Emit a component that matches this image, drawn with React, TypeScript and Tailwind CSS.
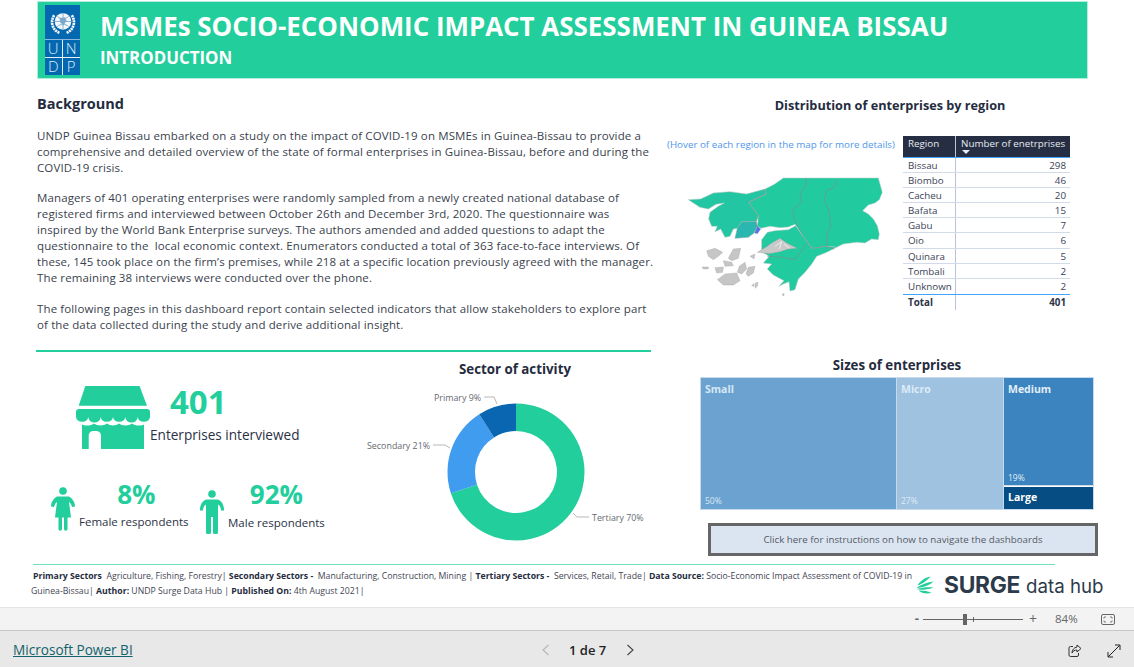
import React from "react";

const GREEN = "#21ce9c";

const rows: [string, string][] = [
  ["Bissau", "298"],
  ["Biombo", "46"],
  ["Cacheu", "20"],
  ["Bafata", "15"],
  ["Gabu", "7"],
  ["Oio", "6"],
  ["Quinara", "5"],
  ["Tombali", "2"],
  ["Unknown", "2"],
];

function polar(cx: number, cy: number, r: number, deg: number) {
  const a = ((deg - 90) * Math.PI) / 180;
  return [cx + r * Math.cos(a), cy + r * Math.sin(a)];
}
function arc(cx: number, cy: number, ro: number, ri: number, a0: number, a1: number) {
  const [x0, y0] = polar(cx, cy, ro, a0);
  const [x1, y1] = polar(cx, cy, ro, a1);
  const [x2, y2] = polar(cx, cy, ri, a1);
  const [x3, y3] = polar(cx, cy, ri, a0);
  const large = a1 - a0 > 180 ? 1 : 0;
  return `M${x0} ${y0}A${ro} ${ro} 0 ${large} 1 ${x1} ${y1}L${x2} ${y2}A${ri} ${ri} 0 ${large} 0 ${x3} ${y3}Z`;
}

function UndpLogo() {
  return (
    <div className="w-[35px] h-[70px] bg-[#0468b1] flex flex-col shrink-0 text-[#dcebf6]">
      <div className="h-[34px] flex items-center justify-center">
        <svg width="28" height="25" viewBox="0 0 27 24">
          <circle cx="13.5" cy="11" r="8" fill="#f4f8fb" />
          <path d="M5 5C1 11 3 19 10 22M22 5C26 11 24 19 17 22" stroke="#f4f8fb" strokeWidth="2.6" fill="none" strokeDasharray="2 .6" />
          <path d="M13.5 3v16M5.500 11h16M8 6c3 3 8 3 11 0M8 16c3-3 8-3 11 0" stroke="#6f9fc9" strokeWidth=".8" fill="none" />
          <path d="M10 8l5-1 2 3-3 5-3-3z" fill="#7ba7cd" />
        </svg>
      </div>
      <div className="flex-1 grid grid-cols-2 grid-rows-2 border-t border-[#8db9da] text-[15px] leading-none font-light">
        <div className="border-r border-b border-[#e6f0f7] flex items-center justify-center">U</div>
        <div className="border-b border-[#e6f0f7] flex items-center justify-center">N</div>
        <div className="border-r border-[#e6f0f7] flex items-center justify-center">D</div>
        <div className="flex items-center justify-center">P</div>
      </div>
    </div>
  );
}

function GuineaMap() {
  const main = "#21ca9f";
  const line = "#7d8f8c";
  return (
    <svg width="210" height="130" viewBox="0 0 630 390" className="block">
      {/* Mainland east, north of the estuary */}
      <path d="M255 60L283 46L310 27L595 27L600 45L607 70L598 92L585 102L565 108L548 125L565 135L580 150L592 170L598 195L595 212L575 210L555 222L530 220L490 225L470 235L440 232L410 240L395 238L375 210L345 166L325 174L300 176L270 172L243 178L232 172L235 140L205 100L258 75Z" fill={main} stroke="#c4cccb" strokeWidth="1.500" />
      {/* Cacheu */}
      <path d="M25 92L62 90L100 72L150 68L200 75L255 60L258 75L205 100L235 140L228 158L185 158L172 178L160 180L150 202L135 205L122 180L105 188L112 172L95 172L86 150L90 130L115 112L133 102L108 106L85 120L60 115Z" fill="#22c6a2" stroke="#b9c4c2" strokeWidth="1.500" />
      {/* Biombo */}
      <path d="M228 158L185 158L172 178L165 208L205 205L222 192L232 172Z" fill="#2ab7b0" stroke="#8ea8a8" strokeWidth="1.500" />
      {/* Bissau */}
      <path d="M232 172L242 180L232 194L224 192Z" fill="#5a70e8" stroke="#7f8ab0" strokeWidth="1" />
      {/* South */}
      <path d="M347 170L375 210L395 238L440 232L470 235L440 250L410 262L395 285L375 310L355 330L350 345L345 362L330 366L327 338L310 345L297 352L312 335L280 318L262 300L275 285L250 282L268 262L245 248L245 212L262 190L285 185L325 182Z" fill={main} stroke="#b9c4c2" strokeWidth="1.500" />
      {/* borders */}
      <g fill="none" stroke={line} strokeWidth="2">
        <path d="M378 27L380 42L360 75L365 100L335 125L350 165L375 210L395 238L440 232" />
        <path d="M470 30L462 55L440 65L432 90L448 130L452 170L440 200L440 232L462 240" />
        <path d="M255 60L258 75L205 100L235 140L228 158L232 172" />
        <path d="M262 262L300 264L345 272L378 226" />
      </g>
      {/* inner estuary */}
      <path d="M232 250L262 232L275 222L300 208L320 222L352 238L325 240L300 248L268 254Z" fill="#c9c9c9" stroke="#999" strokeWidth="1" />
      <path d="M285 232L305 218L298 240M312 225L328 238" stroke="#fff" strokeWidth="2" fill="none" />
      {/* islands */}
      <g fill="#c6c6c6" stroke="#9a9a9a" strokeWidth="1">
        <path d="M80 245L105 238L128 250L115 262L100 272L85 262Z" />
        <path d="M145 268L160 240L182 238L175 268L155 275Z" />
        <path d="M130 275L155 280L160 290L135 292Z" />
        <path d="M105 296L130 294L128 310L110 312Z" />
        <path d="M178 292L195 280L200 300L185 315L172 310Z" />
        <path d="M205 295L225 292L220 312L205 322L198 315Z" />
        <path d="M112 332L135 315L170 312L180 335L160 348L130 348Z" />
        <path d="M210 262L225 255L222 270Z" />
        <path d="M66 294L86 294L84 300L70 300Z" />
        <path d="M215 350L222 344L222 352ZM226 342L234 340L232 352L225 358Z" />
        <path d="M306 378L312 372L312 380Z" />
      </g>
    </svg>
  );
}

function RegionTable() {
  return (
    <div className="w-[167px] text-[9.800px] text-[#3a4256]">
      <div className="flex bg-[#252e42] h-[21px] text-[#e9edf3]">
        <div className="w-[53px] shrink-0 pl-[5px] pt-[1px] border-r border-[#b8c4d8]">Region</div>
        <div className="flex-1 pl-[5px] pt-[1px] relative whitespace-nowrap">
          Number of enetrprises
          <span className="absolute left-[6px] top-[14px] w-0 h-0 border-l-[4px] border-r-[4px] border-t-[4px] border-l-transparent border-r-transparent border-t-[#e9edf3]" />
        </div>
      </div>
      <div className="h-[1px] bg-[#41a4ff]" />
      {rows.map(([r, v], i) => (
        <div key={r} className={`flex h-[15.100px] leading-[15px] ${i < rows.length - 1 ? "border-b border-[#d4dbe8]" : ""}`}>
          <div className="w-[53px] shrink-0 pl-[5px] border-r border-[#b8c4d8]">{r}</div>
          <div className="flex-1 text-right pr-[4px]">{v}</div>
        </div>
      ))}
      <div className="h-[1px] bg-[#41a4ff]" />
      <div className="flex h-[15px] leading-[15px] font-bold text-[#2c3448]">
        <div className="w-[53px] shrink-0 pl-[5px] border-r border-[#b8c4d8]">Total</div>
        <div className="flex-1 text-right pr-[4px]">401</div>
      </div>
    </div>
  );
}

function Store() {
  return (
    <svg width="74" height="64" viewBox="0 0 74 64" className="shrink-0">
      <path d="M9.300 0H63.600L71 19.700H2.700Z" fill={GREEN} />
      <path d="M3 23H71A3 3 0 0 1 74 26V31A6.200 5.500 0 0 1 61.700 31A6.200 5.500 0 0 1 49.300 31A6.200 5.500 0 0 1 37 31A6.200 5.500 0 0 1 24.700 31A6.200 5.500 0 0 1 12.300 31A6.200 5.500 0 0 1 0 31V26A3 3 0 0 1 3 23Z" fill={GREEN} />
      <path fillRule="evenodd" d="M6 38.500C9 40 15 40 18 37.500C21 40 28 40 31 37.500C34 40 40 40 43 37.500C46 40 53 40 56 37.500C59 40 65 40 68 38.500V63H25V49A5 5 0 0 0 20 45H18A5 5 0 0 0 12.700 49V63H6Z" fill={GREEN} />
    </svg>
  );
}

function Female() {
  return (
    <svg width="24" height="44" viewBox="0 0 24 44" className="shrink-0">
      <circle cx="12" cy="4" r="3.800" fill={GREEN} />
      <path d="M6 9.500H18C21 11 24 15 24 19.500L21 20C20.500 17.500 19 15.500 18 15L20 30.500H4L6 15C5 15.500 3.500 17.500 3 20L0 19.500C0 15 3 11 6 9.500Z" fill={GREEN} />
      <path d="M7.500 30H11V42A1.700 1.700 0 0 1 7.500 42ZM13 30H16.500V42A1.700 1.700 0 0 1 13 42Z" fill={GREEN} />
    </svg>
  );
}

function Male() {
  return (
    <svg width="24" height="44" viewBox="0 0 24 44" className="shrink-0">
      <circle cx="12" cy="4" r="3.800" fill={GREEN} />
      <path d="M7 9.500H17C21 10 24 14.500 24 19.500V20.500H21C21 17.500 19.500 15.500 18 14.500V42A1.900 1.900 0 0 1 13 42V27H11V42A1.900 1.900 0 0 1 6 42V14.500C4.500 15.500 3 17.500 3 20.500H0V19.500C0 14.500 3 10 7 9.500Z" fill={GREEN} />
    </svg>
  );
}

function Donut() {
  const cx = 166;
  const cy = 91;
  return (
    <svg width="310" height="160" viewBox="0 0 310 160" className="block" style={{ fontFamily: "'Open Sans', sans-serif" }}>
      <path d={arc(cx, cy, 68.5, 41, 0, 252)} fill="#21ce9c" />
      <path d={arc(cx, cy, 68.5, 41, 252, 327.6)} fill="#3f9cee" />
      <path d={arc(cx, cy, 68.5, 41, 327.6, 360)} fill="#0a66b0" />
      <g fill="none" stroke="#b8b8b8" strokeWidth="1">
        <path d="M134 16H144L147 23" />
        <path d="M83 64H95L100 67" />
        <path d="M223 132L227 136H239" />
      </g>
      <g fill="#666a70" fontSize="8.900">
        <text x="84" y="20">Primary 9%</text>
        <text x="17" y="68">Secondary 21%</text>
        <text x="242" y="140">Tertiary 70%</text>
      </g>
    </svg>
  );
}

function Treemap() {
  return (
    <div className="w-[394px] h-[133px] flex border border-[#c8d9ec] text-white">
      <div className="w-[196px] bg-[#6ca2d0] border-r border-[#c8d9ec] flex flex-col justify-between px-[4px] text-[#d8e8f5]">
        <span className="text-[10.500px] font-bold pt-[4px]">Small</span>
        <span className="text-[8.500px] pb-[1px]">50%</span>
      </div>
      <div className="w-[107px] bg-[#9fc2e0] border-r border-[#c8d9ec] flex flex-col justify-between px-[4px] text-[#dcebf7]">
        <span className="text-[10.500px] font-bold pt-[4px]">Micro</span>
        <span className="text-[8.500px] pb-[1px]">27%</span>
      </div>
      <div className="flex-1 flex flex-col">
        <div className="flex-1 bg-[#3b84c0] flex flex-col justify-between px-[4px] border-b border-[#c8d9ec]">
          <span className="text-[10.500px] font-bold pt-[4px] text-[#e3eff8]">Medium</span>
          <span className="text-[8.500px] text-[#e3eff8]">19%</span>
        </div>
        <div className="h-[23px] bg-[#054d82] border-t border-[#fff] px-[4px] flex items-center">
          <span className="text-[10.500px] font-bold">Large</span>
        </div>
      </div>
    </div>
  );
}

function SurgeLogo() {
  return (
    <div className="flex items-center gap-[10px] shrink-0">
      <svg width="18" height="19" viewBox="0 0 18 18">
        <g fill={GREEN}>
          <path d="M1.500 9C4 4.500 9 1 14.500 0C12 3.500 7 7 1.500 9Z" />
          <path d="M.5 11.500C5 8 11.500 5.500 17.500 5C14 8.500 7 11 .5 11.500Z" />
          <path d="M.5 12.500C6 10.800 12 10.500 17.500 11C12.500 13.200 6 13.800 .5 12.500Z" />
          <path d="M2.500 14C7 13.800 11.500 14.500 15.500 16.300C11 17.800 5.500 17 2.500 14Z" />
        </g>
      </svg>
      <div className="flex items-baseline gap-[6px] text-[#2d3a4a] leading-none" style={{ fontFamily: "Inter, sans-serif" }}>
        <span className="text-[22.800px] font-bold tracking-[-0.3px]">SURGE</span>
        <span className="text-[18.700px]">data hub</span>
      </div>
    </div>
  );
}

export default function App() {
  return (
    <div className="w-[1134px] h-[667px] overflow-hidden bg-white flex flex-col text-[#2b3245]" style={{ fontFamily: "'Open Sans', 'Noto Sans', sans-serif" }}>
      {/* Header */}
      <div className="ml-[37px] mt-[1px] w-[1051px] h-[78px] bg-[#21ce9c] border border-[#b5ecdc] flex items-center pl-[7px] shrink-0">
        <UndpLogo />
        <div className="ml-[20px] text-white font-bold">
          <div className="text-[25.930px] leading-[34px] -mt-[2px] whitespace-nowrap">MSMEs SOCIO-ECONOMIC IMPACT ASSESSMENT IN GUINEA BISSAU</div>
          <div className="text-[16.900px] leading-[24px] mt-[3px]">INTRODUCTION</div>
        </div>
      </div>

      {/* Row one */}
      <div className="flex h-[271px] shrink-0">
        <div className="w-[660px] pl-[37px] pt-[14px] shrink-0">
          <h1 className="text-[14.500px] font-bold leading-[22px] text-[#252c40]">Background</h1>
          <div className="mt-[13px] text-[11.500px] tracking-[0.12px] leading-[16px] whitespace-nowrap text-[#3a3f4e]">
            <p>UNDP Guinea Bissau embarked on a study on the impact of COVID-19 on MSMEs in Guinea-Bissau to provide a<br />comprehensive and detailed overview of the state of formal enterprises in Guinea-Bissau, before and during the<br />COVID-19 crisis.</p>
            <p className="mt-[14px]">Managers of 401 operating enterprises were randomly sampled from a newly created national database of<br />registered firms and interviewed between October 26th and December 3rd, 2020. The questionnaire was<br />inspired by the World Bank Enterprise surveys. The authors amended and added questions to adapt the<br />questionnaire to the&nbsp; local economic context. Enumerators conducted a total of 363 face-to-face interviews. Of<br />these, 145 took place on the firm’s premises, while 218 at a specific location previously agreed with the manager.<br />The remaining 38 interviews were conducted over the phone.</p>
            <p className="mt-[15px]">The following pages in this dashboard report contain selected indicators that allow stakeholders to explore part<br />of the data collected during the study and derive additional insight.</p>
          </div>
        </div>
        <div className="w-[460px] shrink-0">
          <div className="text-center text-[12.700px] font-bold mt-[16px] leading-[20px] text-[#252c40]">Distribution of enterprises by region</div>
          <div className="flex mt-[21px]">
            <div className="w-[243px] shrink-0">
              <div className="text-[9.800px] text-[#4f96ea] pl-[7px] pt-[2px] leading-[14px] whitespace-nowrap">(Hover of each region in the map for more details)</div>
              <div className="pl-[20px] mt-[17px]"><GuineaMap /></div>
            </div>
            <RegionTable />
          </div>
        </div>
      </div>

      {/* Divider */}
      <div className="ml-[36px] w-[615px] h-[2px] bg-[#21ce9c] shrink-0" />

      {/* Row two */}
      <div className="flex h-[212px] shrink-0">
        <div className="w-[360px] shrink-0 pl-[51px] pt-[34px]">
          <div className="flex pl-[25px]">
            <Store />
            <div className="w-[160px]">
              <div className="text-[33px] leading-[36px] font-bold text-[#21ce9c] pl-[20px] -mt-[2px]">401</div>
              <div className="text-[13.600px] leading-[20px] text-[#2b3245] mt-[5px] whitespace-nowrap">Enterprises interviewed</div>
            </div>
          </div>
          <div className="flex mt-[37px]">
            <div className="flex w-[149px]">
              <Female />
              <div className="ml-[4px] -mt-[8px]">
                <div className="text-[26px] leading-[30px] font-bold text-[#21ce9c] text-center pl-[5px]">8%</div>
                <div className="text-[11.500px] leading-[16px] mt-[5px] whitespace-nowrap">Female respondents</div>
              </div>
            </div>
            <div className="flex mt-[3px]">
              <Male />
              <div className="ml-[4px] -mt-[11px]">
                <div className="text-[26px] leading-[30px] font-bold text-[#21ce9c] text-center">92%</div>
                <div className="text-[11.500px] leading-[16px] mt-[6px] whitespace-nowrap">Male respondents</div>
              </div>
            </div>
          </div>
        </div>
        <div className="w-[340px] shrink-0">
          <div className="text-center w-[310px] text-[13.300px] font-bold mt-[7px] leading-[20px] text-[#252c40]">Sector of activity</div>
          <div className="mt-[2px] -ml-[10px]"><Donut /></div>
        </div>
        <div className="w-[400px] shrink-0">
          <div className="text-center w-[394px] text-[13.300px] font-bold mt-[3px] leading-[20px] text-[#252c40]">Sizes of enterprises</div>
          <div className="mt-[2px]"><Treemap /></div>
          <div className="mt-[13px] ml-[8px] w-[390px] h-[33px] border-[3px] border-[#666666] bg-[#dbe5f2] flex items-center justify-center pt-[1px] text-[9.750px] text-[#555a63]">Click here for instructions on how to navigate the dashboards</div>
        </div>
      </div>

      {/* Footer */}
      <div className="ml-[33px] w-[1022px] h-[1px] bg-[#6fe0c0] shrink-0" />
      <div className="flex h-[42px] shrink-0 pl-[31px]">
        <div className="w-[885px] shrink-0 text-[8.710px] leading-[15px] pt-[4px] text-[#3f4653] whitespace-nowrap">
          <div className="pl-[2px]"><b className="text-[#252c40]">Primary Sectors</b>&nbsp; Agriculture, Fishing, Forestry| <b className="text-[#252c40]">Secondary Sectors -</b>&nbsp; Manufacturing, Construction, Mining | <b className="text-[#252c40]">Tertiary Sectors -</b>&nbsp; Services, Retail, Trade| <b className="text-[#252c40]">Data Source:</b> Socio-Economic Impact Assessment of COVID-19 in</div>
          <div>Guinea-Bissau| <b className="text-[#252c40]">Author:</b> UNDP Surge Data Hub | <b className="text-[#252c40]">Published On:</b> 4th August 2021|</div>
        </div>
        <div className="pt-[9px]"><SurgeLogo /></div>
      </div>

      {/* Zoom bar */}
      <div className="h-[24px] bg-[#f3f3f3] border-t border-b border-t-[#e4e4e4] border-b-[#c8c8c8] flex items-center justify-end text-[#666] shrink-0 pr-[19px]">
        <span className="text-[13px] font-bold leading-none mr-[4px] -mt-[2px]">-</span>
        <div className="w-[100px] h-[1px] bg-[#666] relative">
          <span className="absolute left-[40px] -top-[5px] w-[4px] h-[11px] bg-[#666]" />
          <span className="absolute left-[50px] -top-[2px] w-[1px] h-[5px] bg-[#666]" />
        </div>
        <span className="text-[14px] leading-none ml-[6px]">+</span>
        <span className="text-[11.500px] ml-[18px] w-[24px]">84%</span>
        <svg width="14" height="11" viewBox="0 0 14 11" className="ml-[22px]" fill="none" stroke="#666">
          <rect x=".5" y=".5" width="13" height="10" rx="1.500" />
          <path d="M3 4.500V3H5M11 4.500V3H9M3 6.500V8H5M11 6.500V8H9" strokeWidth=".8" />
        </svg>
      </div>

      {/* Bottom bar */}
      <div className="flex-1 bg-[#e8e8e8] relative flex items-center">
        <a className="ml-[13px] mt-[2px] text-[13.600px] underline text-[#12636b]">Microsoft Power BI</a>
        <div className="absolute left-[541px] top-[12px] flex items-center text-[#222]">
          <svg width="10" height="12" viewBox="0 0 10 12" fill="none" stroke="#b5b5b5" strokeWidth="1.100"><path d="M7.500 1L2 6L7.500 11" /></svg>
          <span className="ml-[18px] text-[13px] leading-[14px] font-semibold">1 de 7</span>
          <svg width="10" height="12" viewBox="0 0 10 12" fill="none" stroke="#444" strokeWidth="1.100" className="ml-[19px]"><path d="M2.500 1L8 6L2.500 11" /></svg>
        </div>
        <svg width="14" height="14" viewBox="0 0 14 14" fill="none" stroke="#333" strokeWidth="1" className="absolute left-[1068px] top-[13px]">
          <path d="M5 2.500H2.500A1.500 1.500 0 0 0 1 4V11A1.500 1.500 0 0 0 2.500 12.500H9A1.500 1.500 0 0 0 10.500 11V9" />
          <path d="M9 1L13 4.500L9 8V6C6.500 6 5 7 4 9C4 6 6 3.500 9 3Z" />
        </svg>
        <svg width="14" height="14" viewBox="0 0 14 14" fill="none" stroke="#222" strokeWidth="1" className="absolute left-[1107px] top-[13px]">
          <path d="M1.500 12.500L12.500 1.500M8 1H13V6M1 8V13H6" />
        </svg>
      </div>
    </div>
  );
}
